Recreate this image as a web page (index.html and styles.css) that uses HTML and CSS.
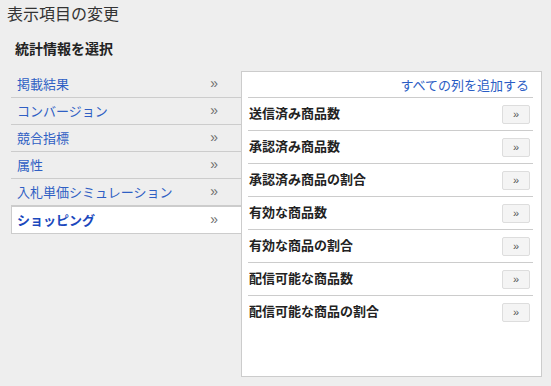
FILE: index.html
```html
<!DOCTYPE html>
<html lang="ja">
<head>
    <meta charset="UTF-8">
    <meta name="viewport" content="width=device-width, initial-scale=1.0">
    <title>表示項目の変更</title>
    <link rel="stylesheet" href="styles.css">
</head>
<body>
    <h1 class="page-title">表示項目の変更</h1>
    <h2 class="section-title">統計情報を選択</h2>
    <div class="picker">
        <ul class="category-list">
            <li class="category"><span>掲載結果</span><span class="arrow">»</span></li>
            <li class="category"><span>コンバージョン</span><span class="arrow">»</span></li>
            <li class="category"><span>競合指標</span><span class="arrow">»</span></li>
            <li class="category"><span>属性</span><span class="arrow">»</span></li>
            <li class="category"><span>入札単価シミュレーション</span><span class="arrow">»</span></li>
            <li class="category selected"><span>ショッピング</span><span class="arrow">»</span></li>
        </ul>
        <div class="column-panel">
            <div class="panel-header">
                <a href="#" class="add-all">すべての列を追加する</a>
            </div>
            <div class="column-row"><span>送信済み商品数</span><button class="add-btn">»</button></div>
            <div class="column-row"><span>承認済み商品数</span><button class="add-btn">»</button></div>
            <div class="column-row"><span>承認済み商品の割合</span><button class="add-btn">»</button></div>
            <div class="column-row"><span>有効な商品数</span><button class="add-btn">»</button></div>
            <div class="column-row"><span>有効な商品の割合</span><button class="add-btn">»</button></div>
            <div class="column-row"><span>配信可能な商品数</span><button class="add-btn">»</button></div>
            <div class="column-row"><span>配信可能な商品の割合</span><button class="add-btn">»</button></div>
        </div>
    </div>
</body>
</html>
```

FILE: styles.css
```css
body {
    margin: 0;
    background-color: #eeeeee;
    font-family: "Liberation Sans", "Noto Sans CJK JP", sans-serif;
    color: #222;
}
.page-title {
    margin: 5px 0 15px 7px;
    font-size: 16px;
    line-height: 20px;
    font-weight: normal;
    color: #333;
}
.section-title {
    margin: 1px 0 13px 15px;
    font-size: 14px;
    line-height: 18px;
    font-weight: bold;
    color: #222;
}
.picker {
    display: flex;
    margin-left: 11px;
}
.category-list {
    list-style: none;
    margin: 0;
    padding: 0;
    width: 230px;
    flex-shrink: 0;
}
.category {
    display: flex;
    justify-content: space-between;
    align-items: center;
    height: 24px;
    padding: 0 23px 2px 6px;
    border-bottom: 1px solid #cccccc;
    font-size: 13px;
    color: #2f5fc4;
}
.category .arrow {
    color: #6f6f6f;
    font-size: 14px;
}
.category.selected {
    background-color: #fff;
    border-top: 1px solid #cccccc;
    border-left: 1px solid #cccccc;
    padding-left: 5px;
    font-weight: bold;
    color: #1a48bd;
}
.category.selected .arrow {
    font-weight: normal;
}
.column-panel {
    width: 285px;
    height: 304px;
    flex-shrink: 0;
    background-color: #fff;
    border: 1px solid #cccccc;
    padding: 0 8px 0 6px;
}
.panel-header {
    display: flex;
    justify-content: flex-end;
    align-items: center;
    height: 24px;
    padding: 0 4px 1px 0;
    border-bottom: 1px solid #cccccc;
}
.add-all {
    font-size: 13px;
    color: #2a5cc4;
    text-decoration: none;
}
.column-row {
    display: flex;
    justify-content: space-between;
    align-items: center;
    height: 32px;
    padding: 0 3px 0 1px;
    border-bottom: 1px solid #cccccc;
    font-size: 13px;
    font-weight: bold;
    color: #222;
}
.column-row span {
    margin-bottom: 3px;
}
.column-row:last-child {
    border-bottom: none;
}
.add-btn {
    width: 28px;
    height: 19px;
    padding: 0;
    background-color: #f4f4f4;
    border: 1px solid #dddddd;
    border-radius: 2px;
    font-family: "Liberation Sans", sans-serif;
    font-size: 11px;
    color: #555;
    cursor: pointer;
}
```
